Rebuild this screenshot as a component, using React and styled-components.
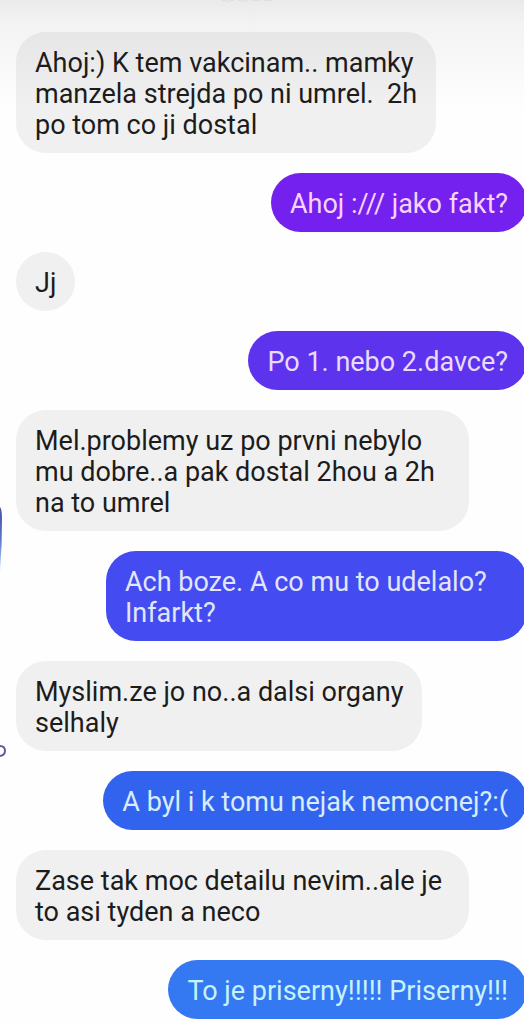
import styled, { createGlobalStyle } from "styled-components";

const GlobalStyle = createGlobalStyle`
  body {
    margin: 0;
    background-color: #fefefe;
    font-family: Roboto, "Liberation Sans", sans-serif;
  }
`;

const Page = styled.main`
  position: relative;
  overflow: hidden;
  padding: 32px 0px 4px 16px;
  background: linear-gradient(#eaeaea 0px, #f3f3f3 24px, #fefefe 110px);
`;

const Thread = styled.ol`
  display: flex;
  flex-direction: column;
  gap: 20px;
  margin: 0px -3px 0px 0px;
  padding: 0px;
  list-style: none;
`;

const Message = styled.li`
  box-sizing: border-box;
  padding: 16px 19px 12px;
  border-radius: 30px;
  font-size: 27px;
  line-height: 31px;
  white-space: pre-wrap;
`;

const Received = styled(Message)`
  align-self: flex-start;
  width: ${(props) => props.$width};
  color: #1c1c1c;
  background: ${(props) => (props.$faded ? "linear-gradient(#e6e6e6, #f0f0f0 60%)" : "#f0f0f0")};
`;

const Sent = styled(Message)`
  align-self: flex-end;
  width: ${(props) => props.$width};
  color: ${(props) => props.$ink};
  background-color: ${(props) => props.$color};
`;

const Header = styled.svg`
  position: absolute;
  top: 0;
  left: 50%;
  margin-left: -42px;
`;

const Edge = styled.svg`
  position: absolute;
  left: 0;
  top: 500px;
`;

const messages = [
  { text: "Ahoj:) K tem vakcinam.. mamky\nmanzela strejda po ni umrel.  2h\npo tom co ji dostal", faded: true },
  { text: "Ahoj :/// jako fakt?", color: "#7420ee", ink: "#f6d4fb" },
  { text: "Jj" },
  { text: "Po 1. nebo 2.davce?", color: "#5d33ee", ink: "#eadbfb" },
  { text: "Mel.problemy uz po prvni nebylo\nmu dobre..a pak dostal 2hou a 2h\nna to umrel", width: "88.6%" },
  { text: "Ach boze. A co mu to udelalo?\nInfarkt?", color: "#444bf0", ink: "#e2e6fb", width: "82.4%" },
  { text: "Myslim.ze jo no..a dalsi organy\nselhaly" },
  { text: "A byl i k tomu nejak nemocnej?:(", color: "#3263ef", ink: "#d8ecfb" },
  { text: "Zase tak moc detailu nevim..ale je\nto asi tyden a neco", width: "88.6%" },
  { text: "To je priserny!!!!! Priserny!!!", color: "#3478f2", ink: "#c8f2fb" },
];

const App = () => {
  return (
    <Page>
      <GlobalStyle />
      <Header width="56" height="3" viewBox="0 0 56 3" aria-hidden="true">
        <path d="M2 0q6 3 12 0M18 0q5 3 10 0M32 0q4 2 8 0M44 0q4 2 8 0" fill="none" stroke="#dcdcdc" />
      </Header>
      <Edge width="8" height="260" viewBox="0 0 8 260" aria-hidden="true">
        <defs>
          <linearGradient id="edge" x1="0" y1="0" x2="0" y2="1">
            <stop offset="0" stopColor="#4a55a4" />
            <stop offset="0.5" stopColor="#5673cc" />
            <stop offset="1" stopColor="#d8ecfb" />
          </linearGradient>
        </defs>
        <path d="M0 7q2 2 2 12q0 28 -2 54z" fill="url(#edge)" />
        <path d="M0 246q5 0 5 5q0 4 -5 5" fill="none" stroke="#5a5ba6" strokeWidth="2" />
      </Edge>
      <Thread>
        {messages.map((message) =>
          message.color ? (
            <Sent key={message.text} $color={message.color} $ink={message.ink} $width={message.width}>
              {message.text}
            </Sent>
          ) : (
            <Received key={message.text} $faded={message.faded} $width={message.width}>
              {message.text}
            </Received>
          )
        )}
      </Thread>
    </Page>
  );
};

export default App;
